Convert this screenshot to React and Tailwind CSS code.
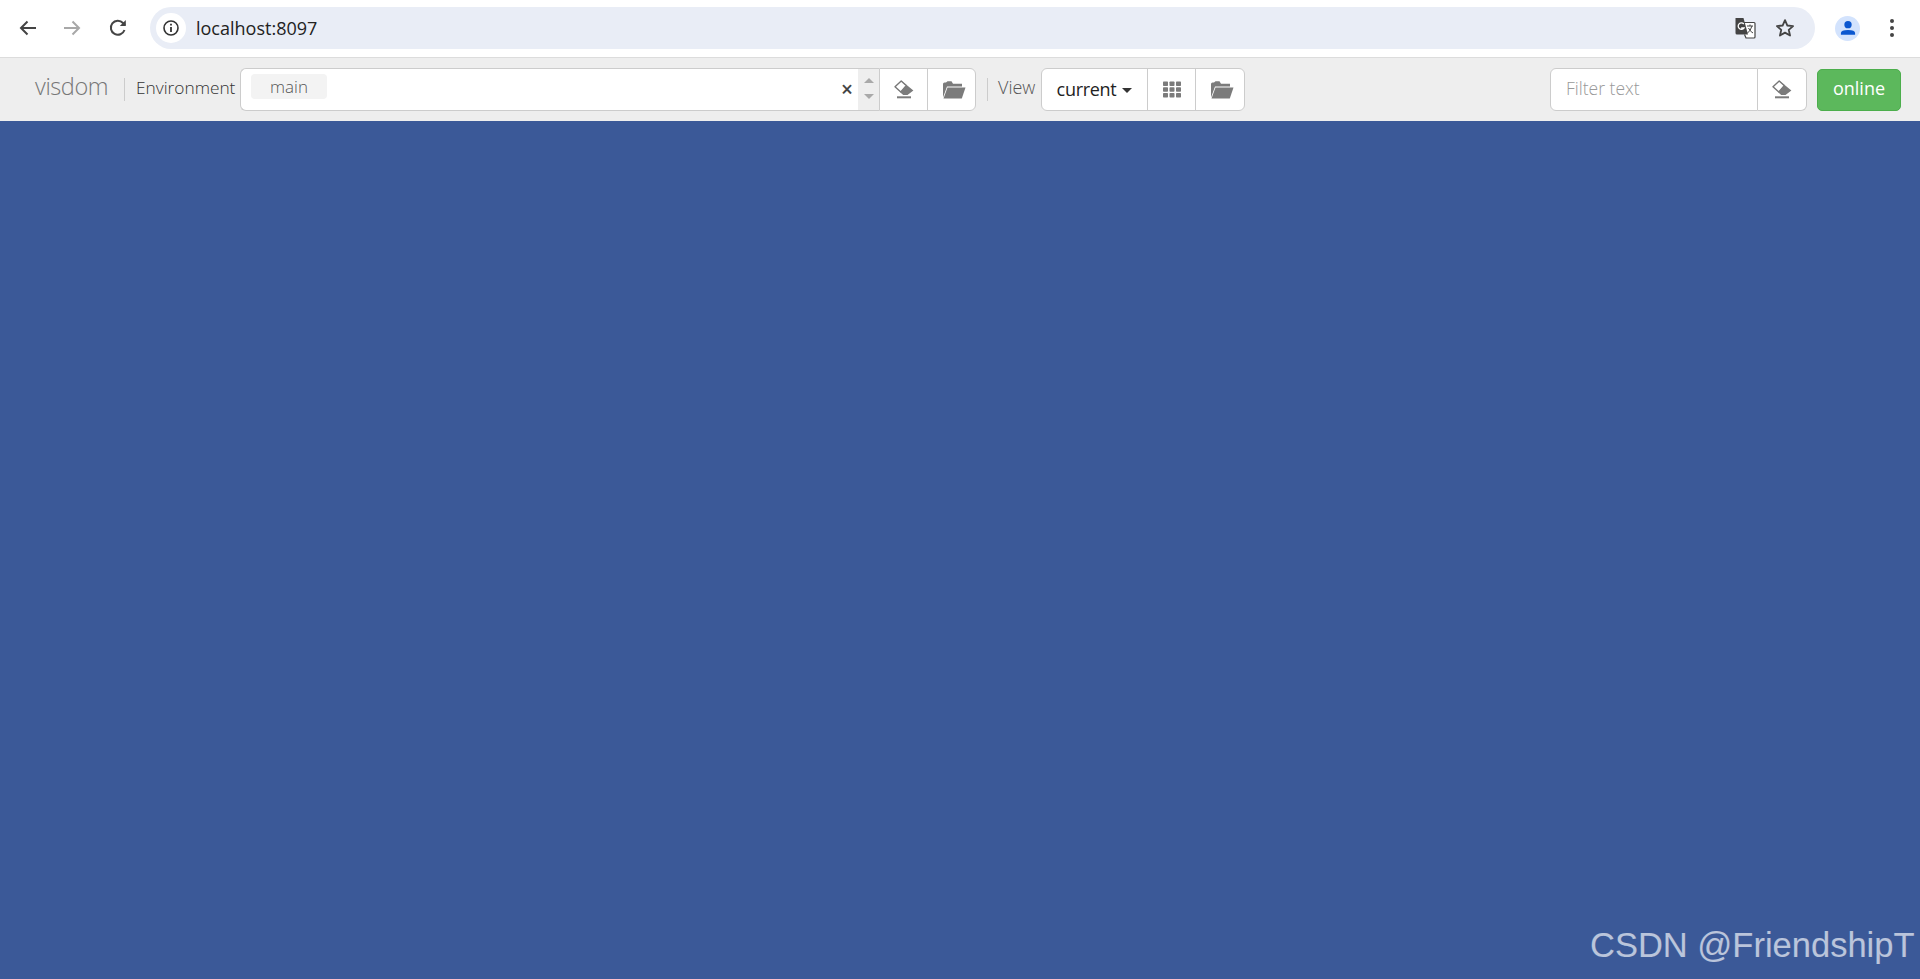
const Eraser = ({ className = "" }) => (
  <svg viewBox="0 0 20 19" className={className} fill="none">
    <path d="M7.2 1 L1 6.8 L6.8 12 L12.2 5.6 Z" fill="#fff" stroke="#777" strokeWidth="1.4" strokeLinejoin="round" />
    <path d="M7.2 0.5 L19.4 10.6 L13.5 15 H9.2 L6.4 12.4 L12 5.4 Z" fill="#7b7b7b" />
    <path d="M3 16.3 H17 V18.3 H3 Z" fill="#7b7b7b" />
  </svg>
);

const Folder = ({ className = "" }) => (
  <svg viewBox="0 0 24 18" className={className}>
    <path d="M1 16.5 V3 Q1 1.5 2.5 1.5 H4 L5.5 0.3 H9.5 L11 2.8 H20 V5.5 H5 Z" fill="#7b7b7b" />
    <path d="M5.5 6.5 H23.5 L19.8 17.5 H1.5 Z" fill="#7b7b7b" />
  </svg>
);

const Grid = ({ className = "" }) => (
  <svg viewBox="0 0 18 16" className={className} fill="#7b7b7b">
    <rect x="0" y="0" width="5" height="4.4" rx="0.7" />
    <rect x="6.5" y="0" width="5" height="4.4" rx="0.7" />
    <rect x="13" y="0" width="5" height="4.4" rx="0.7" />
    <rect x="0" y="5.8" width="5" height="4.4" rx="0.7" />
    <rect x="6.5" y="5.8" width="5" height="4.4" rx="0.7" />
    <rect x="13" y="5.8" width="5" height="4.4" rx="0.7" />
    <rect x="0" y="11.6" width="5" height="4.4" rx="0.7" />
    <rect x="6.5" y="11.6" width="5" height="4.4" rx="0.7" />
    <rect x="13" y="11.6" width="5" height="4.4" rx="0.7" />
  </svg>
);

const Translate = () => (
  <svg viewBox="0 0 22 22" className="w-[22px] h-[22px]">
    <path d="M9 5.5 H20 Q21 5.5 21 6.5 V20 Q21 21 20 21 H12 L10.5 17.5" fill="#fff" stroke="#444" strokeWidth="1.2" />
    <path d="M1.5 1 H9.5 L14 17.5 H3 Q1.5 17.5 1.5 16 Z" fill="#444" />
    <path d="M9.8 7 A3.2 3.2 0 1 0 10 11 H7.2" fill="none" stroke="#fff" strokeWidth="1.3" />
    <path d="M13 9 H19 M16 7.5 V9 M18 9 Q16.5 14 13.5 16 M14.5 11 Q16 14.5 19 16" fill="none" stroke="#444" strokeWidth="1" />
  </svg>
);

export default function App() {
  return (
    <div className="flex flex-col h-[979px] w-[1920px] overflow-hidden bg-[#3b5998] font-['Open_Sans','Liberation_Sans',sans-serif]">
      {/* browser bar */}
      <div className="h-[58px] shrink-0 bg-white border-b border-[#dcdcdc] flex items-center pl-[16px] pb-[1px]">
        <svg viewBox="0 0 24 24" className="w-[24px] h-[24px] mr-[20px] -mt-[1px]" fill="none" stroke="#444" strokeWidth="2">
          <path d="M20 12 H5 M11.5 5.5 L5 12 L11.5 18.5" />
        </svg>
        <svg viewBox="0 0 24 24" className="w-[24px] h-[24px] mr-[22px] -mt-[1px]" fill="none" stroke="#a8a8a8" strokeWidth="2">
          <path d="M4 12 H19 M12.5 5.5 L19 12 L12.5 18.5" />
        </svg>
        <svg viewBox="0 0 24 24" className="w-[24px] h-[24px] mr-[20px] -mt-[1px]" fill="none" stroke="#444" strokeWidth="2">
          <path d="M18.5 14 A7 7 0 1 1 17 7 L19 9" />
          <path d="M19.8 4 V10 H13.8 Z" fill="#444" stroke="none" />
        </svg>
        <div className="w-[1665px] h-[42px] rounded-full bg-[#e9edf6] flex items-center pl-[6px] pr-[19px]">
          <div className="w-[30px] h-[30px] rounded-full bg-white flex items-center justify-center mr-[10px]">
            <svg viewBox="0 0 18 18" className="w-[18px] h-[18px]" fill="none">
              <circle cx="9" cy="9" r="7" stroke="#333" strokeWidth="1.6" />
              <path d="M9 8 V13" stroke="#333" strokeWidth="1.8" />
              <path d="M9 4.8 V6.6" stroke="#333" strokeWidth="1.8" />
            </svg>
          </div>
          <span className="text-[18px] text-[#222] font-normal leading-none">localhost:8097</span>
          <div className="ml-auto flex items-center gap-[18px]">
            <Translate />
            <svg viewBox="0 0 24 24" className="w-[22px] h-[22px]" fill="none" stroke="#444" strokeWidth="2" strokeLinejoin="round">
              <path d="M12 3.5 L14.6 9.3 L20.8 9.9 L16.1 14 L17.5 20.2 L12 17 L6.5 20.2 L7.9 14 L3.2 9.9 L9.4 9.3 Z" />
            </svg>
          </div>
        </div>
        <div className="w-[25px] h-[25px] ml-[20px] rounded-full bg-[#d3e3fd] overflow-hidden flex items-center justify-center">
          <svg viewBox="0 0 24 24" className="w-[20px] h-[20px]" fill="#0b57d0">
            <circle cx="12" cy="8" r="4.4" />
            <path d="M3.5 20 V18 Q3.5 14.4 12 14.4 Q20.5 14.4 20.5 18 V20 Z" />
          </svg>
        </div>
        <div className="ml-[30px] flex flex-col gap-[3px]">
          <span className="w-[4px] h-[4px] rounded-full bg-[#444]" />
          <span className="w-[4px] h-[4px] rounded-full bg-[#444]" />
          <span className="w-[4px] h-[4px] rounded-full bg-[#444]" />
        </div>
      </div>

      {/* visdom toolbar */}
      <div className="h-[63px] shrink-0 bg-[#eeeeee] flex items-center pl-[35px] font-light">
        <span className="text-[23.5px] text-[#777] w-[89px] -mt-[5px] font-light tracking-[-0.4px]">visdom</span>
        <span className="w-px h-[23px] bg-[#cccccc]" />
        <span className="ml-[11px] w-[104px] text-[17.3px] text-[#333] -mt-[3px] whitespace-nowrap">Environment</span>
        <div className="w-[639px] h-[43px] flex items-stretch bg-white border border-[#cccccc] border-r-0 rounded-l-[6px]">
          <div className="ml-[10px] mt-[5px] w-[76px] h-[25px] bg-[#f3f3f3] rounded-[4px] flex items-center justify-center text-[17px] text-[#555]">main</div>
          <span className="ml-auto self-center text-[21px] leading-none text-[#444] font-semibold mr-[5px] mb-[1px]">×</span>
          <div className="w-[21px] bg-[#eeeeee] flex flex-col items-center justify-center gap-[11px] pb-[2px]">
            <span className="w-0 h-0 border-x-[5px] border-x-transparent border-b-[5px] border-b-[#a9a9a9]" />
            <span className="w-0 h-0 border-x-[5px] border-x-transparent border-t-[5px] border-t-[#a9a9a9]" />
          </div>
        </div>
        <div className="h-[43px] flex bg-white border border-[#cccccc] rounded-r-[6px]">
          <div className="w-[48px] flex items-center justify-center border-r border-[#cccccc]"><Eraser className="w-[20px] h-[19px]" /></div>
          <div className="w-[47px] flex items-center justify-center pl-[4px]"><Folder className="w-[24px] h-[18px]" /></div>
        </div>
        <span className="ml-[11px] w-px h-[23px] bg-[#cccccc]" />
        <span className="ml-[10px] w-[43px] text-[18px] text-[#555] -mt-[4px]">View</span>
        <div className="h-[43px] flex bg-white border border-[#cccccc] rounded-[6px]">
          <div className="w-[106px] flex items-center justify-center border-r border-[#cccccc] text-[18px] text-[#222] font-normal tracking-[-0.3px]">
            current
            <span className="ml-[6px] mt-[2px] w-0 h-0 border-x-[5px] border-x-transparent border-t-[5px] border-t-[#333]" />
          </div>
          <div className="w-[48px] flex items-center justify-center border-r border-[#cccccc]"><Grid className="w-[18px] h-[17px]" /></div>
          <div className="w-[48px] flex items-center justify-center pl-[3px]"><Folder className="w-[24px] h-[18px]" /></div>
        </div>
        <div className="ml-auto flex items-center pr-[19px]">
          <div className="w-[208px] h-[43px] bg-white border border-[#cccccc] rounded-l-[6px] flex items-center pl-[15px] pb-[2px] text-[17.5px] text-[#999] font-light">Filter text</div>
          <div className="w-[49px] h-[43px] bg-white border border-l-0 border-[#cccccc] rounded-r-[6px] flex items-center justify-center"><Eraser className="w-[20px] h-[19px]" /></div>
          <div className="ml-[10px] w-[84px] h-[42px] bg-[#5cb85c] border border-[#4cae4c] rounded-[5px] flex items-center justify-center pb-[2px] text-[18px] text-white font-normal">online</div>
        </div>
      </div>

      {/* canvas */}
      <div className="flex-1 flex items-end justify-end relative">
        <span className="absolute left-[1590px] top-[807px] whitespace-nowrap font-['Liberation_Sans',sans-serif] text-[34.5px] leading-none text-white/65">CSDN @FriendshipT</span>
      </div>
    </div>
  );
}
